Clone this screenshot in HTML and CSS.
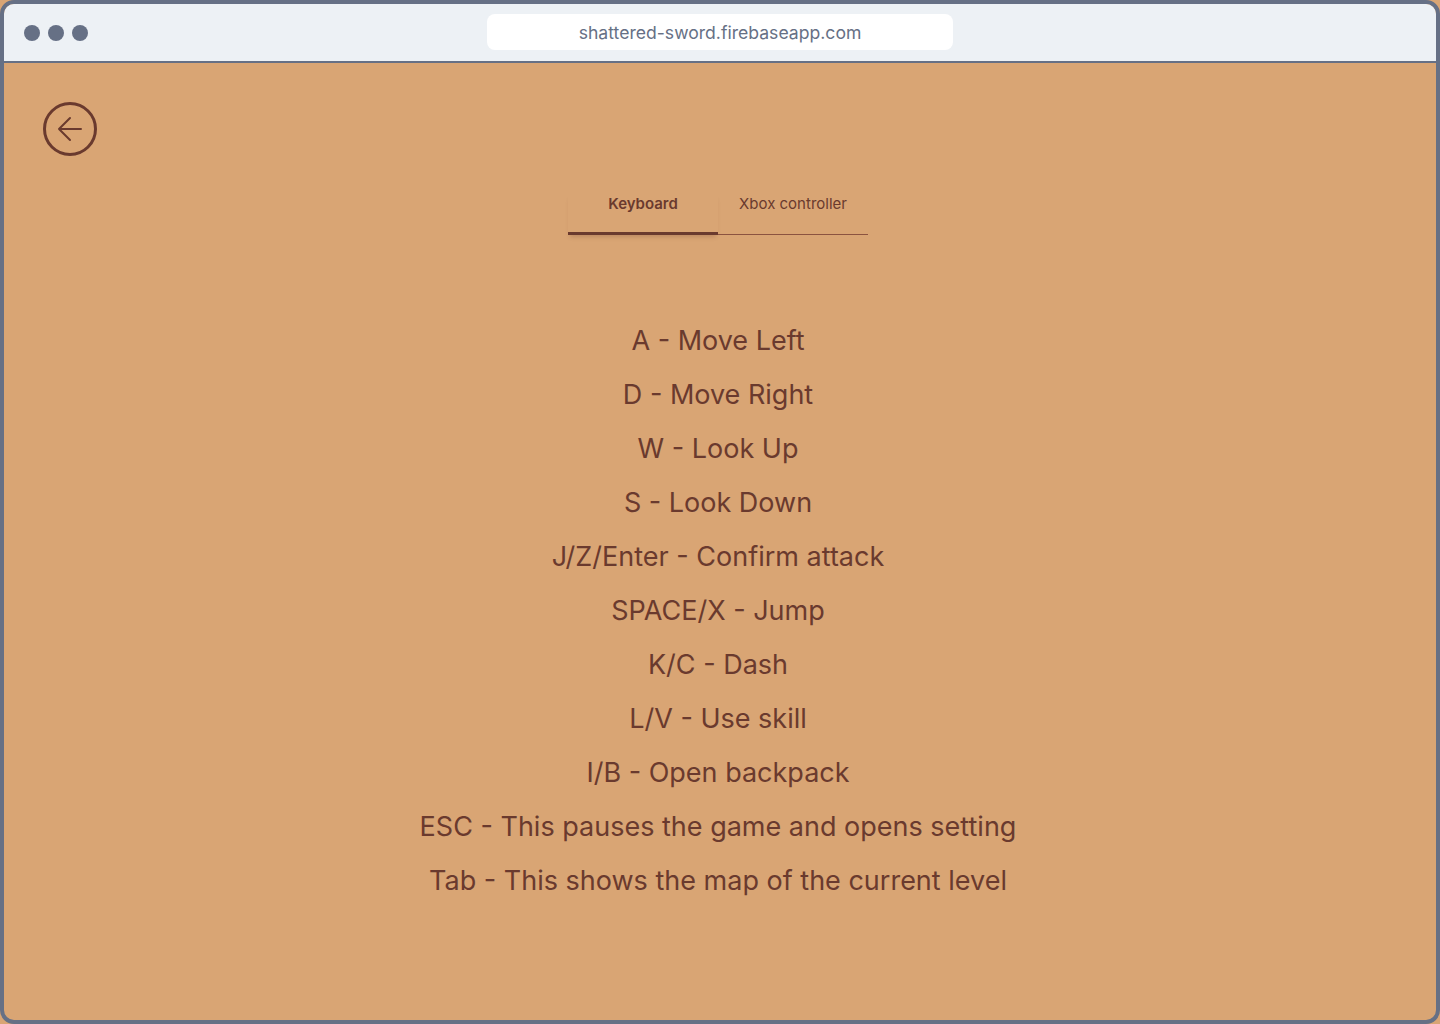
FILE: index.html
```html
<!DOCTYPE html>
<html lang="en">
<head>
<meta charset="utf-8">
<title>Controls</title>
<link rel="stylesheet" href="styles.css">
</head>
<body>
<div class="frame">
  <div class="titlebar">
    <div class="dots"><span class="dot"></span><span class="dot"></span><span class="dot"></span></div>
    <div class="url">shattered-sword.firebaseapp.com</div>
  </div>
  <main class="content">
    <button class="back" aria-label="Back">
      <svg width="54" height="54" viewBox="0 0 54 54" fill="none" stroke="#6a3a2e" stroke-linecap="round" stroke-linejoin="round">
        <circle cx="27" cy="27" r="25.5" stroke-width="3"/>
        <path d="M38 27H16M27 16L16 27L27 38" stroke-width="2"/>
      </svg>
    </button>
    <nav class="tabs">
      <div class="tab active">Keyboard</div>
      <div class="tab">Xbox controller</div>
    </nav>
    <ul class="controls">
      <li>A - Move Left</li>
      <li>D - Move Right</li>
      <li>W - Look Up</li>
      <li>S - Look Down</li>
      <li>J/Z/Enter - Confirm attack</li>
      <li>SPACE/X - Jump</li>
      <li>K/C - Dash</li>
      <li>L/V - Use skill</li>
      <li>I/B - Open backpack</li>
      <li>ESC - This pauses the game and opens setting</li>
      <li>Tab - This shows the map of the current level</li>
    </ul>
  </main>
</div>
</body>
</html>
```
FILE: styles.css
```css
* { box-sizing: border-box; }
html, body { margin: 0; padding: 0; }
body {
  background: #d9a574;
  font-family: Inter, "Noto Sans", sans-serif;
  width: 1440px;
  height: 1024px;
  overflow: hidden;
}
.frame {
  width: 1440px;
  height: 1024px;
  border: 4px solid #667085;
  border-radius: 14px;
  overflow: hidden;
  display: flex;
  flex-direction: column;
  background: #d9a574;
}
.titlebar {
  height: 59px;
  flex: none;
  background: #edf1f5;
  border-bottom: 2px solid #667085;
  display: flex;
  align-items: center;
  position: relative;
}
.dots {
  display: flex;
  gap: 8px;
  padding-left: 20px;
}
.dot {
  width: 16px;
  height: 16px;
  border-radius: 50%;
  background: #667085;
}
.url {
  position: absolute;
  left: 483px;
  top: 10px;
  width: 466px;
  height: 36px;
  background: #fff;
  border-radius: 8px;
  color: #667085;
  font-size: 17.6px;
  display: flex;
  align-items: center;
  justify-content: center;
}
.content {
  flex: 1;
  padding: 39px 43px 39px 39px;
  display: flex;
  flex-direction: column;
  align-items: center;
  color: #6a3a2e;
}
.back {
  align-self: flex-start;
  width: 54px;
  height: 54px;
  padding: 0;
  border: 0;
  background: none;
  cursor: pointer;
  display: block;
}
.back svg { display: block; }
.tabs {
  margin-top: 38px;
  display: flex;
}
.tab {
  width: 150px;
  text-align: center;
  font-size: 15px;
  line-height: 20px;
  padding-bottom: 20px;
  border-bottom: 1px solid #8b5340;
  color: #6a3a2e;
}
.tab.active {
  font-weight: 600;
  padding-bottom: 18px;
  border-bottom: 3px solid #6a3a2e;
  box-shadow: 0 4px 4px -2px rgba(110, 58, 46, 0.25);
}
.controls {
  list-style: none;
  margin: 79px 0 0;
  padding: 0;
  text-align: center;
}
.controls li {
  font-size: 27px;
  line-height: 54px;
}
```
